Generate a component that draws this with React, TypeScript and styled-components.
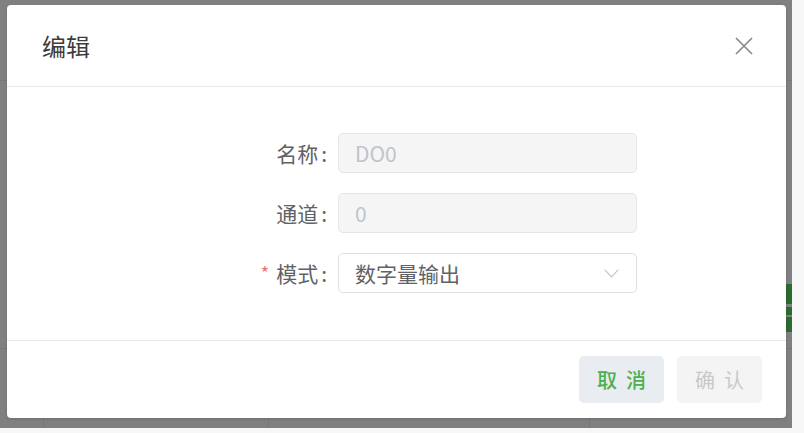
import React from "react";
import styled, { createGlobalStyle } from "styled-components";

const Global = createGlobalStyle`
  html, body {
    margin: 0;
    padding: 0;
    background: #f7f7f7;
  }
  body {
    font-family: "Noto Sans CJK SC", "Noto Sans", sans-serif;
  }
  * { box-sizing: border-box; }
`;

const Backdrop = styled.div`
  width: 792px;
  height: 428px;
  padding: 5px 6px 10px 7px;
  background-color: #808080;
  background-image:
    linear-gradient(#2c6a2f, #2c6a2f),
    linear-gradient(#2c6a2f, #2c6a2f),
    linear-gradient(#2c6a2f, #2c6a2f),
    linear-gradient(#777, #777),
    linear-gradient(#777, #777),
    linear-gradient(#777, #777),
    linear-gradient(#777, #777),
    linear-gradient(#777, #777);
  background-size: 6px 20px, 6px 8px, 6px 15px, 1px 348px, 1px 348px, 1px 348px,
    792px 1px, 792px 1px;
  background-position: 786px 284px, 786px 307px, 786px 317px, 43px 80px,
    268px 80px, 589px 80px, 0 80px, 0 348px;
  background-repeat: no-repeat;
`;

const Modal = styled.div`
  width: 779px;
  height: 413px;
  background: #fff;
  border-radius: 4px;
  display: flex;
  flex-direction: column;
  box-shadow: 0 1px 3px rgba(0, 0, 0, 0.15);
`;

const Header = styled.div`
  height: 82px;
  flex: none;
  display: flex;
  align-items: center;
  justify-content: space-between;
  padding: 0 33px 0 35px;
  border-bottom: 1px solid #e9e9e9;
`;

const Title = styled.span`
  font-size: 24px;
  line-height: 24px;
  color: #3c3c3c;
`;

const CloseButton = styled.button`
  border: none;
  background: transparent;
  padding: 0;
  width: 18px;
  height: 18px;
  display: flex;
  cursor: pointer;
`;

const Body = styled.div`
  flex: 1;
  padding: 46px 0 0 231px;
  border-bottom: 1px solid #e9e9e9;
`;

const Form = styled.div`
  display: grid;
  grid-template-columns: 100px 299px;
  grid-auto-rows: 40px;
  row-gap: 20px;
`;

const Label = styled.label`
  display: flex;
  align-items: center;
  justify-content: flex-end;
  padding-right: 11px;
  font-size: 21px;
  color: #606266;
  white-space: nowrap;
`;

const Colon = styled.span`
  margin-left: 3px;
`;

const Star = styled.span`
  color: #f56c6c;
  font-size: 18px;
  margin-right: 7px;
  position: relative;
  top: -1px;
`;

const Field = styled.div<{ $disabled?: boolean }>`
  height: 40px;
  border: 1px solid ${(p) => (p.$disabled ? "#e6e6e6" : "#dcdfe6")};
  background: ${(p) => (p.$disabled ? "#f5f5f5" : "#fff")};
  border-radius: 5px;
  display: flex;
  align-items: center;
  justify-content: space-between;
  padding: 0 17px 0 16px;
  font-size: 21px;
  color: ${(p) => (p.$disabled ? "#c0c4cc" : "#606266")};
`;

const Footer = styled.div`
  height: 77px;
  flex: none;
  display: flex;
  align-items: center;
  justify-content: flex-end;
  gap: 13px;
  padding: 0 24px 0 0;
`;

const Button = styled.button<{ $variant: "cancel" | "disabled" }>`
  width: 85px;
  height: 47px;
  border: none;
  border-radius: 5px;
  font-family: "Noto Sans CJK SC", "Noto Sans", sans-serif;
  font-size: 20px;
  font-weight: ${(p) => (p.$variant === "cancel" ? 500 : 400)};
  letter-spacing: 9px;
  padding: 0 0 0 9px;
  background: ${(p) => (p.$variant === "cancel" ? "#e9ecf0" : "#f4f4f4")};
  color: ${(p) => (p.$variant === "cancel" ? "#4caf50" : "#c8c8c8")};
  cursor: ${(p) => (p.$variant === "cancel" ? "pointer" : "not-allowed")};
`;

const Chevron = () => (
  <svg width="15" height="9" viewBox="0 0 15 9" fill="none">
    <path d="M0.7 0.7 L7.5 7.8 L14.3 0.7" stroke="#c0c4cc" strokeWidth="1.2" />
  </svg>
);

const CloseIcon = () => (
  <svg width="18" height="18" viewBox="0 0 18 18" fill="none">
    <path d="M1 1 L17 17 M17 1 L1 17" stroke="#8a8a8a" strokeWidth="1.7" />
  </svg>
);

export default function App() {
  return (
    <>
      <Global />
      <Backdrop>
        <Modal>
          <Header>
            <Title>编辑</Title>
            <CloseButton aria-label="close">
              <CloseIcon />
            </CloseButton>
          </Header>
          <Body>
            <Form>
              <Label>
                名称<Colon>:</Colon>
              </Label>
              <Field $disabled>DO0</Field>
              <Label>
                通道<Colon>:</Colon>
              </Label>
              <Field $disabled>0</Field>
              <Label>
                <Star>*</Star>模式<Colon>:</Colon>
              </Label>
              <Field>
                <span>数字量输出</span>
                <Chevron />
              </Field>
            </Form>
          </Body>
          <Footer>
            <Button $variant="cancel">取消</Button>
            <Button $variant="disabled">确认</Button>
          </Footer>
        </Modal>
      </Backdrop>
    </>
  );
}
